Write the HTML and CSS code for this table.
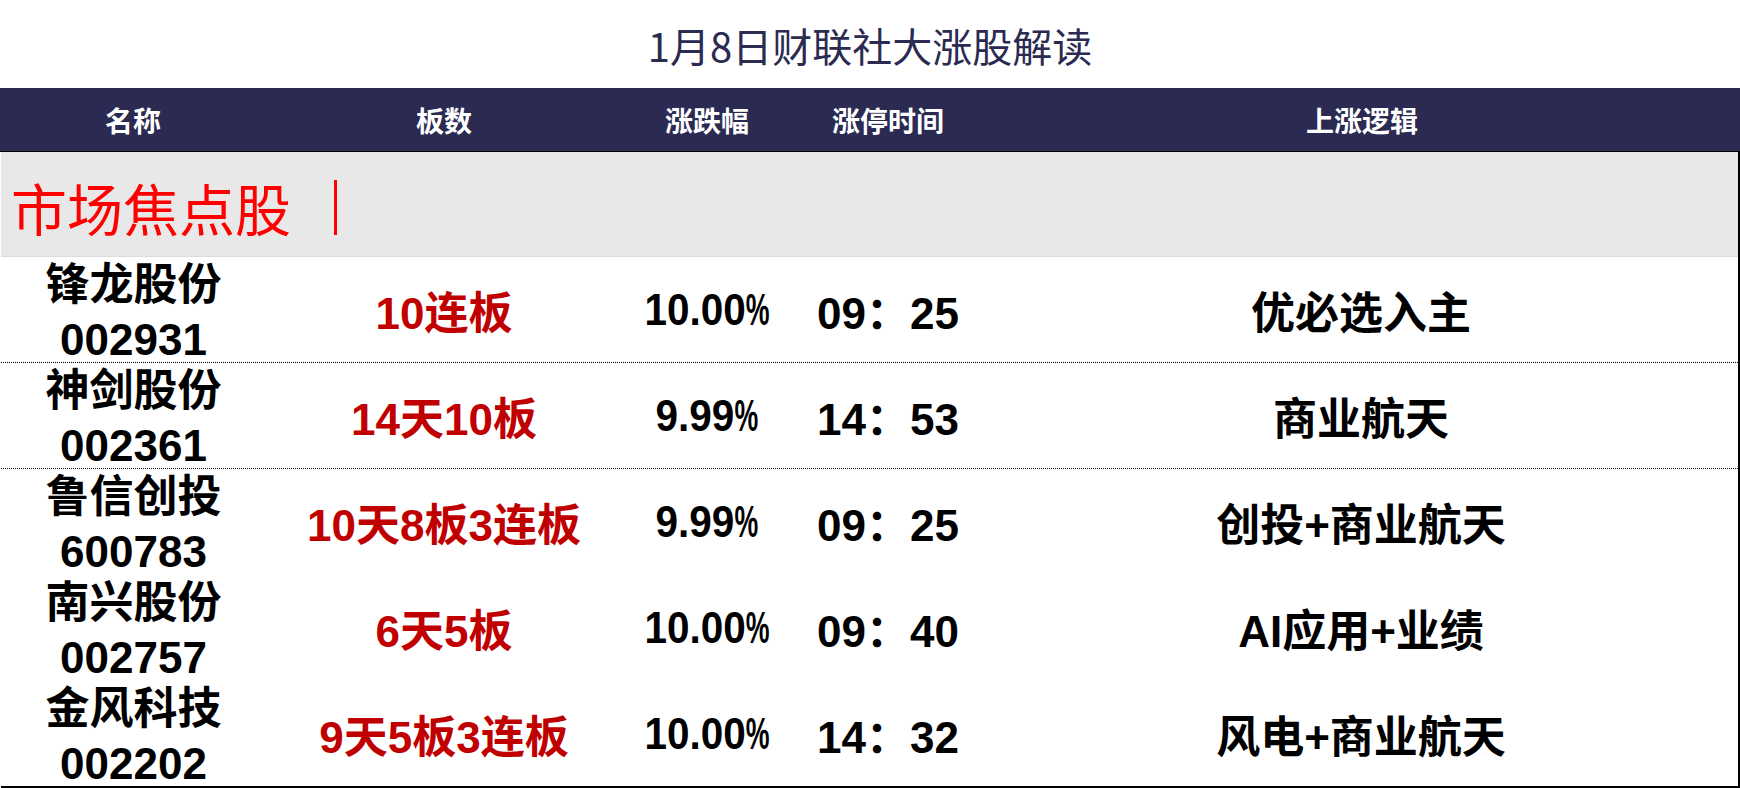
FILE: index.html
```html
<!DOCTYPE html>
<html lang="zh-CN">
<head>
<meta charset="utf-8">
<title>1月8日财联社大涨股解读</title>
<link rel="stylesheet" href="styles.css">
</head>
<body>
<div class="title">1月8日财联社大涨股解读</div>
<div class="head">
  <div>名称</div>
  <div>板数</div>
  <div>涨跌幅</div>
  <div>涨停时间</div>
  <div>上涨逻辑</div>
</div>
<div class="table">
  <div class="section"><span class="sec-text">市场焦点股</span><span class="bar"></span></div>
  <div class="row dotted">
    <div class="name"><div>锋龙股份</div><div>002931</div></div>
    <div class="board">10连板</div>
    <div class="pct"><span class="pv">10.00<span class="pc">%</span></span></div>
    <div class="time">09：25</div>
    <div class="logic">优必选入主</div>
  </div>
  <div class="row dotted">
    <div class="name"><div>神剑股份</div><div>002361</div></div>
    <div class="board">14天10板</div>
    <div class="pct"><span class="pv">9.99<span class="pc">%</span></span></div>
    <div class="time">14：53</div>
    <div class="logic">商业航天</div>
  </div>
  <div class="row">
    <div class="name"><div>鲁信创投</div><div>600783</div></div>
    <div class="board">10天8板3连板</div>
    <div class="pct"><span class="pv">9.99<span class="pc">%</span></span></div>
    <div class="time">09：25</div>
    <div class="logic">创投+商业航天</div>
  </div>
  <div class="row">
    <div class="name"><div>南兴股份</div><div>002757</div></div>
    <div class="board">6天5板</div>
    <div class="pct"><span class="pv">10.00<span class="pc">%</span></span></div>
    <div class="time">09：40</div>
    <div class="logic">AI应用+业绩</div>
  </div>
  <div class="row last">
    <div class="name"><div>金风科技</div><div>002202</div></div>
    <div class="board">9天5板3连板</div>
    <div class="pct"><span class="pv">10.00<span class="pc">%</span></span></div>
    <div class="time">14：32</div>
    <div class="logic">风电+商业航天</div>
  </div>
</div>
</body>
</html>
```

FILE: styles.css
```css
* { box-sizing: border-box; }
html, body {
  margin: 0;
  padding: 0;
  background: #ffffff;
}
body {
  width: 1740px;
  height: 788px;
  overflow: hidden;
}
.title {
  height: 88px;
  padding-top: 2px;
  display: flex;
  align-items: center;
  justify-content: center;
  font-family: "Noto Sans CJK SC", sans-serif;
  font-weight: 400;
  font-size: 40px;
  color: #2b2a50;
}
.head {
  height: 64px;
  display: grid;
  grid-template-columns: 266px 356px 170px 192px 1fr;
  align-items: center;
  text-align: center;
  background: #2b2a52;
  border-bottom: 1px solid #000;
  color: #ffffff;
  font-family: "Noto Sans CJK SC", sans-serif;
  font-weight: 700;
  font-size: 28px;
  line-height: 1;
}
.table {
  margin-left: 1px;
  border-right: 2px solid #000;
  border-bottom: 2px solid #000;
}
.section {
  height: 105px;
  background: #e8e8e8;
  border-bottom: 1px solid #dcdcdc;
  display: flex;
  align-items: center;
  padding-left: 10px;
  padding-top: 6px;
  color: #ff0000;
  font-family: "Noto Sans CJK SC", sans-serif;
  font-weight: 400;
  font-size: 56px;
  line-height: 1;
}
.bar {
  display: inline-block;
  width: 3px;
  height: 55px;
  margin-left: 43px;
  background: #ff0000;
}
.row {
  height: 106px;
  display: grid;
  grid-template-columns: 265px 356px 170px 192px 1fr;
  align-items: center;
  text-align: center;
  font-family: "Liberation Sans", "Noto Sans CJK SC", sans-serif;
  font-weight: 700;
  font-size: 44px;
  color: #000;
}
.row.dotted {
  border-bottom: 1px dotted #000;
}
.row.last {
  height: 105px;
}
.name {
  display: flex;
  flex-direction: column;
  gap: 11px;
  line-height: 44px;
  padding-top: 5px;
}
.board {
  color: #c00000;
}
.pv {
  display: inline-block;
  transform: scaleX(0.92);
}
.pc {
  display: inline-block;
  transform: scaleX(0.66);
  transform-origin: left center;
  margin-right: -13px;
}
```
